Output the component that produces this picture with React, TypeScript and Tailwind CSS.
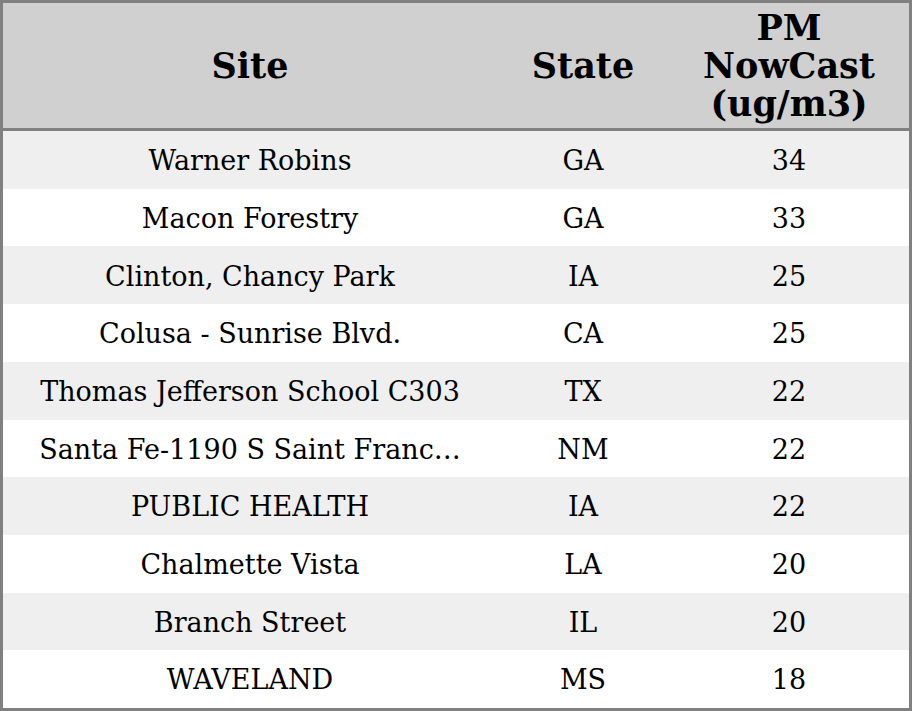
const rows: [string, string, string][] = [
  ['Warner Robins', 'GA', '34'],
  ['Macon Forestry', 'GA', '33'],
  ['Clinton, Chancy Park', 'IA', '25'],
  ['Colusa - Sunrise Blvd.', 'CA', '25'],
  ['Thomas Jefferson School C303', 'TX', '22'],
  ['Santa Fe-1190 S Saint Franc…', 'NM', '22'],
  ['PUBLIC HEALTH', 'IA', '22'],
  ['Chalmette Vista', 'LA', '20'],
  ['Branch Street', 'IL', '20'],
  ['WAVELAND', 'MS', '18'],
]

export default function App() {
  return (
    <div className="w-[912px] h-[711px] flex flex-col border-[3px] border-[#808080] bg-white text-black font-['DejaVu_Serif',serif]">
      <div className="h-[128px] shrink-0 flex bg-[#d0d0d0] border-b-[3px] border-[#808080] font-bold text-[35px] leading-[38px]">
        <div className="w-[494px] flex items-center justify-center">Site</div>
        <div className="w-[172px] flex items-center justify-center">State</div>
        <div className="flex-1 flex items-center justify-center text-center">
          PM
          <br />
          NowCast
          <br />
          (ug/m3)
        </div>
      </div>
      <div className="flex-1 flex flex-col text-[27px]">
        {rows.map(([site, state, value], i) => (
          <div key={i} className={`flex-1 flex items-center pt-[3px] ${i % 2 === 0 ? 'bg-[#efefef]' : 'bg-white'}`}>
            <div className="w-[494px] px-[20px] text-center whitespace-nowrap">{site}</div>
            <div className="w-[172px] text-center">{state}</div>
            <div className="flex-1 text-center">{value}</div>
          </div>
        ))}
      </div>
    </div>
  )
}
